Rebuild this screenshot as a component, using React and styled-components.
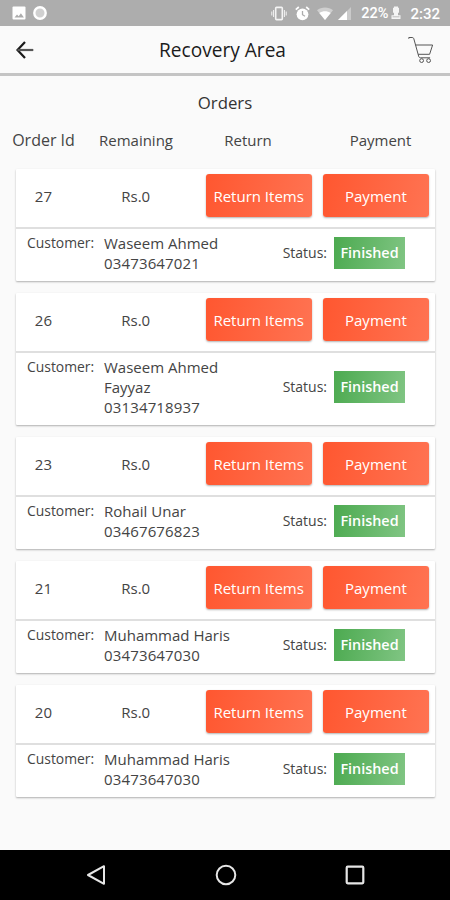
import React from 'react';
import styled, { createGlobalStyle } from 'styled-components';

const GlobalStyle = createGlobalStyle`
  * {
    box-sizing: border-box;
  }

  body {
    margin: 0;
    background: #fafafa;
    font-family: 'Open Sans', 'Noto Sans', sans-serif;
    color: #444;
  }
`;

const Screen = styled.div`
  display: flex;
  flex-direction: column;
  width: 450px;
  height: 900px;
  background: #fafafa;
  overflow: hidden;
`;

const StatusBar = styled.div`
  display: flex;
  justify-content: space-between;
  align-items: center;
  height: 26px;
  padding: 0 10px 0 12px;
  background: #adadad;
  color: #fff;
  font-family: Roboto, sans-serif;
  font-size: 15px;
  font-weight: 500;
`;

const StatusGroup = styled.div`
  display: flex;
  align-items: center;
`;

const StatusIcon = styled.svg`
  display: block;
  margin-left: ${props => props.$gap || 0}px;
`;

const Battery = styled.span`
  margin-left: 10px;
  padding-top: 2px;
  font-size: 14.5px;
  line-height: 26px;
`;

const Clock = styled.span`
  margin-left: 9px;
  padding-top: 2px;
  font-size: 15px;
  line-height: 26px;
`;

const Header = styled.header`
  display: flex;
  justify-content: space-between;
  align-items: center;
  height: 50px;
  padding: 0 16px 0 15px;
  border-bottom: 3px solid #c4c4c4;
`;

const Title = styled.h1`
  margin: 0;
  padding-right: 4px;
  font-size: 19.1px;
  line-height: 26px;
  font-weight: 400;
  color: #1c1c1c;
`;

const HeaderSide = styled.div`
  display: flex;
  width: 28px;
  justify-content: ${props => (props.$end ? 'flex-end' : 'flex-start')};
`;

const Content = styled.main`
  flex: 1;
`;

const SectionTitle = styled.h2`
  margin: 15px 0 0;
  text-align: center;
  font-size: 16.8px;
  line-height: 24px;
  font-weight: 400;
  color: #333;
`;

const ColumnHeads = styled.div`
  display: grid;
  grid-template-columns: 87px 98px 126px 139px;
  margin-top: 13px;
  line-height: 24px;
  font-size: 15px;
  text-align: center;
`;

const ColumnHead = styled.span`
  font-size: ${props => (props.$large ? 16 : 15)}px;
`;

const OrderList = styled.div`
  display: flex;
  flex-direction: column;
  gap: 12px;
  padding: 17px 15px 0 16px;
`;

const Card = styled.article`
  background: #fff;
  border-radius: 1px;
  box-shadow: 0 1px 2px rgba(0, 0, 0, 0.3);
`;

const OrderRow = styled.div`
  display: flex;
  align-items: center;
  height: 60px;
  padding: 0 6px 5px 0;
  border-bottom: 2px solid #dfdfdf;
  font-size: 15px;
`;

const OrderId = styled.span`
  width: 55px;
  text-align: center;
`;

const Remaining = styled.span`
  width: 130px;
  text-align: center;
`;

const ActionButton = styled.button`
  width: 106.5px;
  height: 43px;
  padding: 0;
  margin-left: ${props => props.$gap}px;
  border: 0;
  border-radius: 3px;
  background: linear-gradient(100deg, #ff5730, #ff7352);
  box-shadow: 0 1px 2px rgba(0, 0, 0, 0.3);
  color: #fff;
  font-family: inherit;
  font-size: 15px;
`;

const CustomerRow = styled.div`
  display: flex;
  align-items: center;
  padding: 4px 30px 8px 11px;
  font-size: 15px;
  line-height: 20px;
`;

const CustomerLabel = styled.span`
  align-self: flex-start;
  width: 77px;
  font-size: 13.9px;
`;

const Customer = styled.div`
  flex: 1;
`;

const Phone = styled.div`
  letter-spacing: 0.15px;
`;

const StatusLabel = styled.span`
  margin-right: 7px;
  font-size: 14px;
`;

const StatusBadge = styled.span`
  width: 71px;
  background: linear-gradient(100deg, #4caa50, #80c583);
  color: #fff;
  text-align: center;
  font-size: 14.4px;
  font-weight: 600;
  line-height: 32px;
`;

const NavBar = styled.nav`
  display: flex;
  align-items: center;
  justify-content: space-between;
  height: 50px;
  padding: 0 85px 0 86px;
  background: #000;
`;

const orders = [
  { id: 27, customer: ['Waseem Ahmed'], phone: '03473647021' },
  { id: 26, customer: ['Waseem Ahmed', 'Fayyaz'], phone: '03134718937' },
  { id: 23, customer: ['Rohail Unar'], phone: '03467676823' },
  { id: 21, customer: ['Muhammad Haris'], phone: '03473647030' },
  { id: 20, customer: ['Muhammad Haris'], phone: '03473647030' },
];

const PhoneStatus = () => (
  <StatusBar>
    <StatusGroup>
      <StatusIcon width="14" height="14" viewBox="0 0 14 14">
        <rect x="0.5" y="0.5" width="13" height="13" rx="1" fill="#fff" />
        <path d="M2.5 11.5l2.5-3 1.7 1.7 2.2-3 3 4.3z" fill="#adadad" />
      </StatusIcon>
      <StatusIcon $gap={7} width="14" height="14" viewBox="0 0 14 14">
        <circle cx="7" cy="7" r="5.7" fill="#d0d0d0" stroke="#fff" strokeWidth="2.4" />
      </StatusIcon>
    </StatusGroup>
    <StatusGroup>
      <StatusIcon width="16" height="15" viewBox="0 0 16 15" fill="none" stroke="#f4f4f4">
        <rect x="4.7" y="1.4" width="6.6" height="12.2" rx="0.8" strokeWidth="1.6" />
        <path d="M2.6 4v7M13.4 4v7M0.8 5.5v4M15.2 5.5v4" strokeWidth="1" />
      </StatusIcon>
      <StatusIcon $gap={8} width="15" height="15" viewBox="0 0 15 15" fill="none" stroke="#fff">
        <circle cx="7.5" cy="8.3" r="5.9" fill="#fff" stroke="none" />
        <path d="M0.8 3.6l3-2.6M14.2 3.6l-3-2.6" strokeWidth="1.7" />
        <path d="M7.5 5v3.7l2.5 1.5" stroke="#adadad" strokeWidth="1.3" />
      </StatusIcon>
      <StatusIcon $gap={7} width="16" height="13" viewBox="0 0 16 13">
        <path d="M0 3.3C4.5-0.4 11.5-0.4 16 3.3L8 13z" fill="#cfcfcf" />
        <path d="M2.3 6C5.5 3.5 10.5 3.5 13.7 6L8 13z" fill="#fff" />
      </StatusIcon>
      <StatusIcon $gap={5} width="13" height="13" viewBox="0 0 13 13">
        <path d="M13 0v13H0z" fill="#cacaca" />
        <path d="M9 4v9H0z" fill="#fff" />
      </StatusIcon>
      <Battery>22%</Battery>
      <StatusIcon $gap={3} width="10" height="14" viewBox="0 0 10 14">
        <path d="M3 0.5h4v1.2h1v5H7v2.6h2.5V13h-9V9.3H3V6.7H2v-5h1z" fill="#f4f4f4" />
        <path d="M1.5 10.8h7" stroke="#adadad" strokeWidth="0.8" />
      </StatusIcon>
      <Clock>2:32</Clock>
    </StatusGroup>
  </StatusBar>
);

const CartIcon = () => (
  <svg width="27" height="28" viewBox="0 0 27 28" fill="none" stroke="#555" strokeWidth="1">
    <path d="M1.8 2.8V1.5h3.4c.9 0 1.3.4 1.6 1.2L11.6 20c.3 1.2.9 1.8 1.9 1.8h9.6" />
    <path d="M8.6 9h17l-3 9.3H11.2" />
    <circle cx="14.6" cy="24.6" r="1.9" />
    <circle cx="21.6" cy="24.6" r="1.9" />
  </svg>
);

const OrderCard = ({ order }) => (
  <Card>
    <OrderRow>
      <OrderId>{order.id}</OrderId>
      <Remaining>Rs.0</Remaining>
      <ActionButton $gap={5}>Return Items</ActionButton>
      <ActionButton $gap={11}>Payment</ActionButton>
    </OrderRow>
    <CustomerRow>
      <CustomerLabel>Customer:</CustomerLabel>
      <Customer>
        {order.customer.map(line => (
          <div key={line}>{line}</div>
        ))}
        <Phone>{order.phone}</Phone>
      </Customer>
      <StatusLabel>Status:</StatusLabel>
      <StatusBadge>Finished</StatusBadge>
    </CustomerRow>
  </Card>
);

const App = () => {
  return (
    <>
      <GlobalStyle />
      <Screen>
        <PhoneStatus />
        <Header>
          <HeaderSide>
            <svg width="20" height="20" viewBox="0 0 20 20" fill="none" stroke="#1a1a1a" strokeWidth="2.2">
              <path d="M10 2L2.5 10l7.5 8" />
              <path d="M2.5 10H18.3" stroke="#555" />
            </svg>
          </HeaderSide>
          <Title>Recovery Area</Title>
          <HeaderSide $end>
            <CartIcon />
          </HeaderSide>
        </Header>
        <Content>
          <SectionTitle>Orders</SectionTitle>
          <ColumnHeads>
            <ColumnHead $large>Order Id</ColumnHead>
            <ColumnHead>Remaining</ColumnHead>
            <ColumnHead>Return</ColumnHead>
            <ColumnHead>Payment</ColumnHead>
          </ColumnHeads>
          <OrderList>
            {orders.map(order => (
              <OrderCard key={order.id} order={order} />
            ))}
          </OrderList>
        </Content>
        <NavBar>
          <svg width="20" height="20" viewBox="0 0 20 20" fill="none" stroke="#e6e6e6" strokeWidth="2" strokeLinejoin="round">
            <path d="M18 1.2v17.6L2 10z" />
          </svg>
          <svg width="22" height="22" viewBox="0 0 22 22" fill="none" stroke="#e6e6e6" strokeWidth="2">
            <circle cx="11" cy="11" r="9.3" />
          </svg>
          <svg width="20" height="20" viewBox="0 0 20 20" fill="none" stroke="#e6e6e6" strokeWidth="2.2">
            <rect x="1.7" y="1.7" width="16.6" height="16.6" rx="1" />
          </svg>
        </NavBar>
      </Screen>
    </>
  );
};

export default App;
